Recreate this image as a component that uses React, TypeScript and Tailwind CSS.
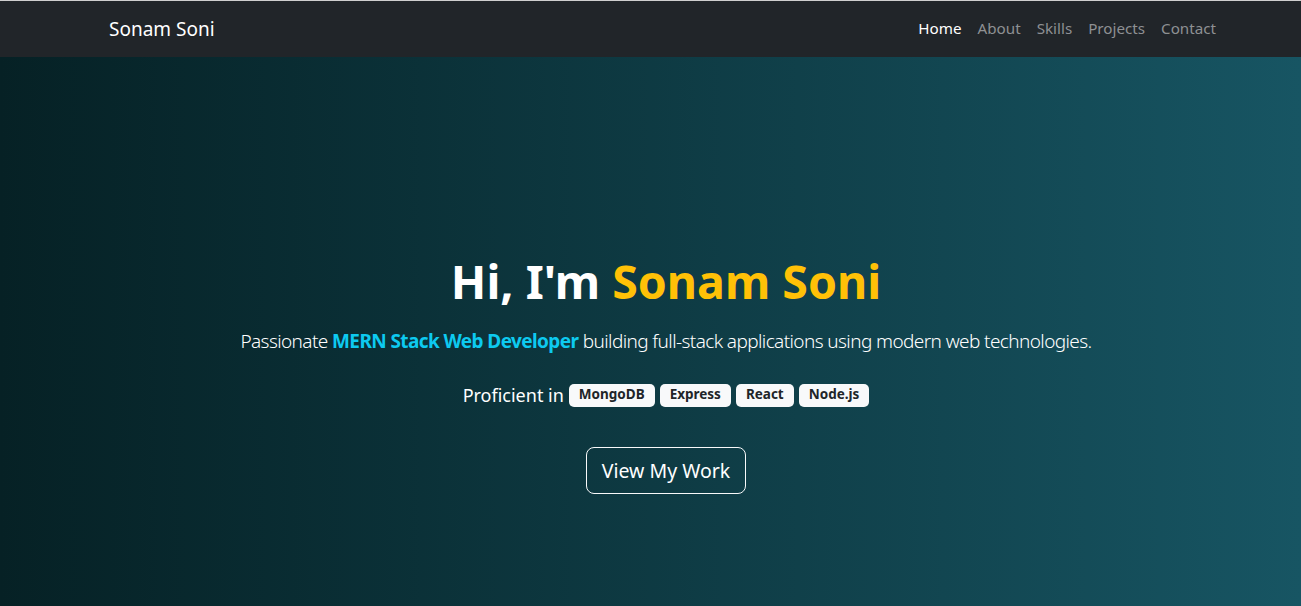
import React from "react";

export default function App() {
  const font = { fontFamily: '"Noto Sans", "Open Sans", sans-serif' };
  return (
    <div className="w-full h-[606px] overflow-hidden flex flex-col" style={font}>
      <nav className="h-[57px] shrink-0 bg-[#212529] border-t border-[#cfcfcf] flex items-center justify-between pl-[109px] pr-[85px]">
        <span className="text-[19px] text-white leading-none">Sonam Soni</span>
        <ul className="flex items-center gap-[16px] text-[15.2px] leading-none">
          <li className="text-white">Home</li>
          <li className="text-[#8e9093]">About</li>
          <li className="text-[#8e9093]">Skills</li>
          <li className="text-[#8e9093]">Projects</li>
          <li className="text-[#8e9093]">Contact</li>
        </ul>
      </nav>
      <section className="flex-1 bg-gradient-to-r from-[#062125] to-[#175563] flex flex-col items-center pt-[195px] pl-[31px]">
        <h1 className="text-[46.5px] font-bold leading-[58px] text-white">
          Hi, I'm <span className="text-[#ffc107]">Sonam Soni</span>
        </h1>
        <p className="mt-[16px] text-[19px] tracking-[-0.6px] font-light leading-[30px] text-white">
          Passionate <span className="font-bold text-[#0dcaf0]">MERN Stack Web Developer</span> building full-stack applications using modern web technologies.
        </p>
        <div className="mt-[23px] flex items-center h-[32px] text-[18px] text-white">
          <span className="mr-[5px]">Proficient in</span>
          <div className="flex gap-[5px]">
            {["MongoDB", "Express", "React", "Node.js"].map((t) => (
              <span key={t} className="bg-[#f8f9fa] text-[#212529] text-[13.5px] font-bold rounded-[5px] px-[10px] h-[23px] flex items-center leading-none">
                {t}
              </span>
            ))}
          </div>
        </div>
        <button className="mt-[36px] h-[47px] w-[160px] border border-[#f8f9fa] rounded-[8px] text-[19.5px] text-white flex items-center justify-center">
          View My Work
        </button>
      </section>
    </div>
  );
}
